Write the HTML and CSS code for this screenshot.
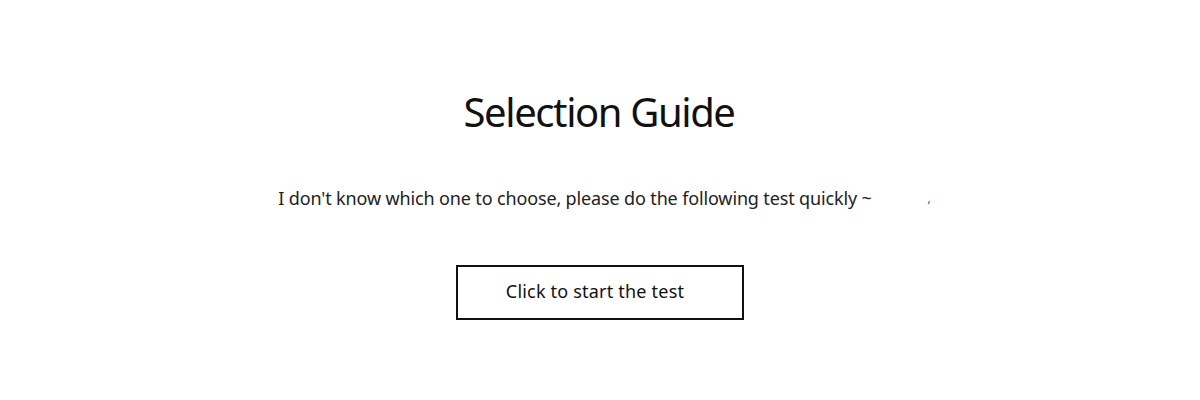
FILE: index.html
```html
<!DOCTYPE html>
<html>
<head>
<meta charset="utf-8">
<link rel="stylesheet" href="styles.css">
</head>
<body>
<main class="guide">
  <h1 class="guide-title">Selection Guide</h1>
  <p class="guide-sub"><span>I don't know which one to choose, please do the following test quickly ~</span><span class="tick">ʻ</span></p>
  <div class="btn-row"><a class="start-btn">Click to start the test</a></div>
</main>
</body>
</html>
```
FILE: styles.css
```css
html, body { margin: 0; background: #fff; }
body { width: 1200px; height: 400px; overflow: hidden; font-family: "Noto Sans", "Open Sans", sans-serif; color: #111; }
.guide { display: flex; flex-direction: column; align-items: center; padding-top: 84px; }
.guide-title { margin: 0; font-weight: 400; font-size: 40px; line-height: 56px; letter-spacing: -1.4px; color: #111; transform: translateX(-1px); }
.guide-sub { margin: 43px 0 0; font-size: 18px; line-height: 30px; letter-spacing: -0.14px; color: #222; display: flex; align-items: flex-start; transform: translateX(4px); }
.guide-sub .tick { margin-left: 56px; font-size: 12px; line-height: 26px; color: #555; position: relative; top: 10px; }
.btn-row { margin-top: 52px; display: flex; justify-content: center; }
.start-btn { box-sizing: border-box; width: 288px; height: 55px; border: 2px solid #111; display: flex; align-items: center; justify-content: center; font-size: 18px; letter-spacing: 0.2px; color: #111; padding-right: 10px; padding-bottom: 3px; }
```
